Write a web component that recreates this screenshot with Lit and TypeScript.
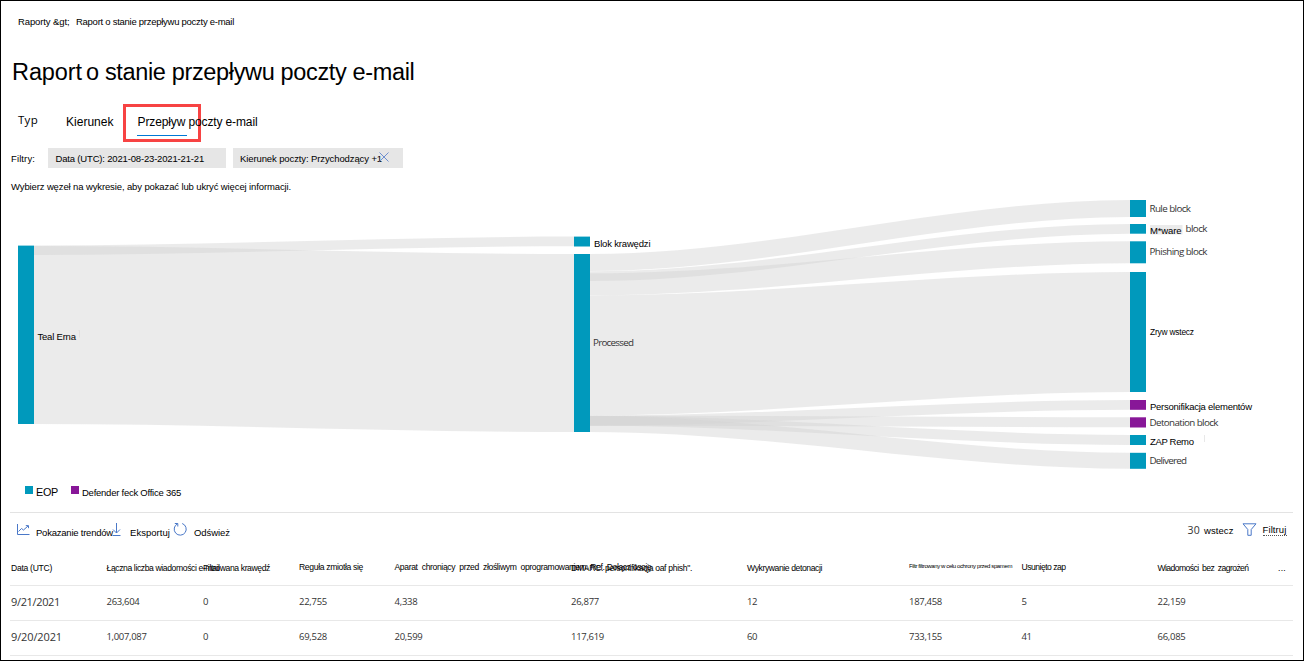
import { LitElement, html, svg, css } from "lit";
import { customElement, property } from "lit/decorators.js";

/** A single line of text tracked so that it fills a given width. */
@customElement("fit-text")
class FitText extends LitElement {
  @property({ type: Number }) w = 0;
  @property() text = "";

  static styles = css`
    :host { display: inline-block; white-space: pre; flex: none; }
    .run { display: inline-block; transform-origin: 0 50%; }
  `;

  updated() {
    const run = this.renderRoot.querySelector(".run") as HTMLElement;
    run.style.letterSpacing = "0px";
    const natural = run.getBoundingClientRect().width;
    run.style.letterSpacing = `${(this.w - natural) / this.text.length}px`;
    this.style.width = `${this.w}px`;
  }

  render() {
    return html`<span class="run">${this.text}</span>`;
  }
}

interface Node { x: number; y: number; h: number; c?: string }
interface Label { x: number; y: number; w: number; t: string; kind: string; size: number }

const TEAL = "#0099bc";
const PURPLE = "#881798";

const nodes: Node[] = [
  { x: 18, y: 245.6, h: 178.4 },
  { x: 574, y: 236.6, h: 9.9 },
  { x: 574, y: 254, h: 178 },
  { x: 1130, y: 200, h: 17 },
  { x: 1130, y: 224, h: 9.7 },
  { x: 1130, y: 241.3, h: 22 },
  { x: 1130, y: 272, h: 120 },
  { x: 1130, y: 400, h: 9.8, c: PURPLE },
  { x: 1130, y: 417.3, h: 10.2, c: PURPLE },
  { x: 1130, y: 435, h: 10 },
  { x: 1130, y: 452.8, h: 16 },
];

// x0, top at x0, x1, top at x1, thickness
const links: number[][] = [
  [34, 245.5, 574, 236.6, 9.6],
  [34, 246, 574, 254, 178],
  [590, 254, 1130, 200, 17],
  [590, 271.3, 1130, 224, 9.7],
  [590, 273.3, 1130, 241.3, 22],
  [590, 295.5, 1130, 272, 120],
  [590, 415.7, 1130, 400, 9.8],
  [590, 415.7, 1130, 417.3, 10],
  [590, 415.7, 1130, 435, 10],
  [590, 416, 1130, 452.8, 16],
];

const labels: Label[] = [
  { x: 37.5, y: 340, w: 38.5, t: "Teal Erna", kind: "new", size: 9.5 },
  { x: 594, y: 247, w: 56.5, t: "Blok krawędzi", kind: "new", size: 9.5 },
  { x: 593, y: 346, w: 41, t: "Processed", kind: "old", size: 9.8 },
  { x: 1149.5, y: 212, w: 41.5, t: "Rule block", kind: "old", size: 9.8 },
  { x: 1150, y: 234, w: 31.5, t: "M*ware", kind: "new", size: 9.5 },
  { x: 1185.5, y: 232, w: 22, t: "block", kind: "old", size: 9.8 },
  { x: 1149.5, y: 255, w: 58, t: "Phishing block", kind: "old", size: 9.8 },
  { x: 1150, y: 335, w: 44, t: "Zryw wstecz", kind: "new", size: 8.4 },
  { x: 1150, y: 410, w: 102, t: "Personifikacja elementów", kind: "new", size: 9.5 },
  { x: 1149.5, y: 426, w: 69, t: "Detonation block", kind: "old", size: 9.8 },
  { x: 1150, y: 445, w: 44, t: "ZAP Remo", kind: "new", size: 9.5 },
  { x: 1149.5, y: 464, w: 37.5, t: "Delivered", kind: "old", size: 9.8 },
];

const heads: [string, number, string][] = [
  ["Data (UTC)", 41, "h"],
  ["Łączna liczba wiadomości e-mail", 113, "h"],
  ["Filtrowana krawędź", 67, "h"],
  ["Reguła zmiotła się", 64, "h up"],
  ["Aparat  chroniący  przed  złośliwym  oprogramowaniem. Ref. Dołącz osoję", 257, "h up"],
  ["DMARC. personifikacja oaf phish\".", 121, "h"],
  ["Wykrywanie detonacji", 75, "h"],
  ["Filtr filtrowany w celu ochrony przed spamem", 103, "h tiny"],
  ["Usunięto zap", 44, "h up"],
  ["Wiadomości  bez  zagrożeń", 91, "h"],
  ["...", 8, "h"],
];

const rows: string[][] = [
  ["9/21/2021", "263,604", "0", "22,755", "4,338", "26,877", "12", "187,458", "5", "22,159"],
  ["9/20/2021", "1,007,087", "0", "69,528", "20,599", "117,619", "60", "733,155", "41", "66,085"],
];
const widths: number[][] = [
  [49, 33, 5, 28, 23, 28, 10, 33, 5, 28],
  [51, 40, 5, 28, 28, 33, 10, 33, 10, 28],
];

const ribbon = ([x0, a, x1, b, t]: number[]) => {
  const p = x0 + (x1 - x0) / 3;
  const q = x1 - (x1 - x0) / 3;
  return `M${x0} ${a}C${p} ${a} ${q} ${b} ${x1} ${b}V${b + t}C${q} ${b + t} ${p} ${a + t} ${x0} ${a + t}Z`;
};

@customElement("app-root")
class AppRoot extends LitElement {
  static styles = css`
    :host {
      display: block; box-sizing: border-box; width: 1304px; height: 661px;
      border: 1px solid #000; background: #fff; color: #000; overflow: hidden;
      font-family: "Liberation Sans", Arial, sans-serif; font-size: 9.5px;
    }
    .crumbs { display: flex; align-items: center; gap: 6.5px; height: 41px; padding-left: 17px; }
    .title { display: flex; align-items: center; gap: 4px; height: 60px; margin: 0; padding-left: 11px;
      font-size: 23.5px; font-weight: 400; line-height: 28px; }
    .tabs { display: flex; height: 43px; padding-left: 17px; font-size: 12px; line-height: 15px; }
    .typ { margin: 10px 28px 0 0; font-family: "Open Sans", sans-serif; font-size: 11.5px; line-height: 16px; }
    .tab { margin: 13px 24px 0 0; }
    .current { position: relative; margin-top: 13px; }
    .label { position: relative; }
    .current::before { content: ""; position: absolute; left: -14.5px; top: -11px; width: 72px; height: 32px;
      border: 3px solid #f74343; }
    .current::after { content: ""; position: absolute; left: -.5px; top: 20px; width: 50px; height: 1px; background: #0078d4; }
    .filters { display: flex; align-items: center; height: 26px; padding: 0 0 0 10px; }
    .caption { margin-right: 13px; }
    .chip { display: flex; align-items: center; box-sizing: border-box; height: 20px; background: #e6e6e6; padding: 1px 0 0 7.5px; }
    .date { width: 178px; margin-right: 7px; }
    .direction { width: 170px; padding-left: 7px; }
    .close { width: 12px; height: 12px; margin: -3px 0 0 -4px; }
    .hint { display: flex; align-items: center; box-sizing: border-box; height: 32px; padding: 0 0 2px 10px; }
    .chart { display: block; width: 1302px; height: 275px; margin-top: -8px; }
    .link { fill: #d3d3d3; fill-opacity: .45; }
    .new { fill: #000; }
    .old { fill: #333; font-family: "Open Sans", sans-serif; }
    .legend { display: flex; align-items: center; box-sizing: border-box; height: 42px; padding: 3px 0 0 24px; }
    .swatch { width: 8px; height: 8px; margin: -5px 3px 0 0; background: #0099bc; }
    .defender { margin: -5px 3px 0 13px; background: #881798; }
    .eop { font-size: 10.8px; margin-top: -1px; }
    .toolbar { display: flex; align-items: center; height: 37px; margin: 0 10px 0 9px; padding-left: 7px; border-top: 1px solid #e3e3e3; }
    .toolbar svg { flex: none; margin-top: -4px; fill: none; stroke: #4a78c8; stroke-width: 1; }
    .action { margin-top: 2px; }
    .toolbar .trend { margin-right: 6px; }
    .toolbar .export { margin: -4px 8px 0 -2px; }
    .toolbar .refresh { margin-right: 6px; margin-left: 3px; }
    .grow { flex: 1; }
    .thirty { font-family: "Open Sans", sans-serif; font-size: 10.5px; color: #333; margin: -4px 4px 0 0; }
    .right { margin-top: -3px; }
    .toolbar .funnel { margin: -4px 6px 0 8px; }
    .underlined { border-bottom: 1px dotted #555; line-height: 10px; margin: -2px 6.5px 0 0; }
    .row { display: grid; align-items: center; box-sizing: border-box; height: 35px; margin: 0 10px 0 9px; padding: 0 0 3px 1px;
      grid-template-columns: 95.5px 96.5px 96px 95.5px 176.5px 176px 162px 112.5px 136px 120.5px 10px;
      border-bottom: 1px solid #e8e8e8; color: #333; font-family: "Open Sans", sans-serif; font-size: 9.5px; }
    .head { height: 36px; padding-bottom: 0; color: #000; font-family: "Liberation Sans", sans-serif; font-size: 8.6px; }
    .up { margin-top: -2px; }
    .tiny { font-size: 6px; margin-top: -4px; }
    .day { font-size: 11px; }
  `;

  render() {
    return html`
      <nav class="crumbs">
        <fit-text .w=${51.5} .text=${"Raporty &gt;"}></fit-text>
        <fit-text .w=${158} .text=${"Raport o stanie przepływu poczty e-mail"}></fit-text>
      </nav>
      <h1 class="title">
        <fit-text .w=${70} .text=${"Raport"}></fit-text>
        <fit-text .w=${328.5} .text=${"o stanie przepływu poczty e-mail"}></fit-text>
      </h1>
      <div class="tabs">
        <fit-text class="typ" .w=${20} .text=${"Typ"}></fit-text>
        <fit-text class="tab" .w=${47.5} .text=${"Kierunek"}></fit-text>
        <div class="current"><fit-text class="label" .w=${120} .text=${"Przepływ poczty e-mail"}></fit-text></div>
      </div>
      <div class="filters">
        <fit-text class="caption" .w=${24} .text=${"Filtry:"}></fit-text>
        <div class="chip date"><fit-text .w=${148.5} .text=${"Data (UTC): 2021-08-23-2021-21-21"}></fit-text></div>
        <div class="chip direction">
          <fit-text .w=${142} .text=${"Kierunek poczty: Przychodzący +1"}></fit-text>
          <svg class="close" viewBox="0 0 12 12" fill="none" stroke="#6f8fcf"><path d="M1.5 1.5l9 9M10.5 1.5l-9 9" /></svg>
        </div>
      </div>
      <div class="hint"><fit-text .w=${280} .text=${"Wybierz węzeł na wykresie, aby pokazać lub ukryć więcej informacji."}></fit-text></div>
      <svg class="chart" viewBox="1 195 1302 275">
        ${links.map((l) => svg`<path class="link" d=${ribbon(l)} />`)}
        <rect x="1150" y="225" width="32.5" height="9.5" fill="#ebebeb" />
        ${nodes.map((n) => svg`<rect x=${n.x} y=${n.y} width="16" height=${n.h} fill=${n.c ?? TEAL} />`)}
        <path d="M78.5 330.5h1v7M1204.5 435v7" fill="none" stroke="#d8d8d8" stroke-width=".6" />
        ${labels.map((l) => svg`<text class=${l.kind} x=${l.x} y=${l.y} font-size=${l.size} textLength=${l.w}>${l.t}</text>`)}
      </svg>
      <div class="legend">
        <span class="swatch"></span><fit-text class="eop" .w=${22} .text=${"EOP"}></fit-text>
        <span class="swatch defender"></span><fit-text .w=${99} .text=${"Defender feck Office 365"}></fit-text>
      </div>
      <div class="toolbar">
        <svg class="trend" width="13" height="13" viewBox="0 0 13 13"><path d="M.5 1v10.5H12.5M1.5 8.5L4.5 5.5l2 1.5L11 3M8.8 2.6h2.7v2.6" /></svg>
        <fit-text class="action" .w=${77} .text=${"Pokazanie trendów"}></fit-text>
        <svg class="export" width="11" height="14" viewBox="0 0 11 14"><path d="M5.5 0v10M2 6.5l3.5 3.5L9 6.5M1.5 12.5h8" /></svg>
        <fit-text class="action" .w=${40} .text=${"Eksportuj"}></fit-text>
        <svg class="refresh" width="15" height="15" viewBox="0 0 15 15"><path d="M9.2 1.5a6 6 0 1 1-4.7.3M1.8 1.5h3v3" /></svg>
        <fit-text class="action" .w=${36} .text=${"Odśwież"}></fit-text>
        <span class="grow"></span>
        <fit-text class="thirty" .w=${12.5} .text=${"30"}></fit-text>
        <fit-text class="right" .w=${29.5} .text=${"wstecz"}></fit-text>
        <svg class="funnel" width="15" height="13" viewBox="0 0 15 13"><path d="M1 .8h13L9.2 6.5v5.8H5.8V6.5z" /></svg>
        <fit-text class="underlined" .w=${24} .text=${"Filtruj"}></fit-text>
      </div>
      <div class="row head">
        ${heads.map(([t, w, c]) => html`<fit-text class=${c} .w=${w} .text=${t}></fit-text>`)}
      </div>
      ${rows.map((r, i) => html`<div class="row">
        ${r.map((t, j) => html`<fit-text class=${j ? "" : "day"} .w=${widths[i][j]} .text=${t}></fit-text>`)}
      </div>`)}
    `;
  }
}
